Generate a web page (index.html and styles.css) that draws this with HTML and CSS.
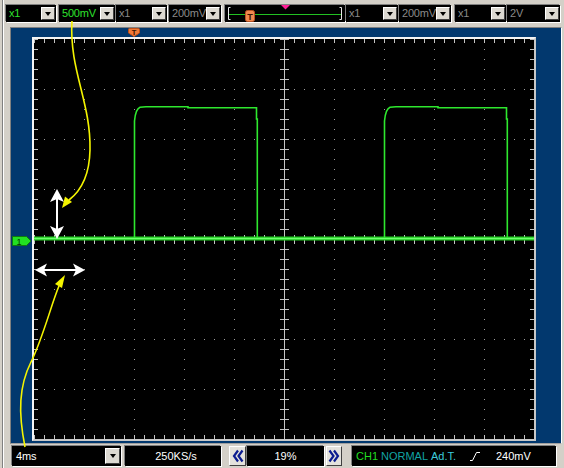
FILE: index.html
```html
<!DOCTYPE html>
<html>
<head>
<meta charset="utf-8">
<link rel="stylesheet" href="styles.css">
</head>
<body>
<div class="app">
  <div class="edge"></div>
  <div class="main">
    <div class="topbar">
      <div class="combo t1"><span class="val green">x1</span><span class="btn"><i class="tri"></i></span></div>
      <div class="combo t2"><span class="val green">500mV</span><span class="btn"><i class="tri"></i></span></div>
      <div class="combo t3"><span class="val gray">x1</span><span class="btn"><i class="tri"></i></span></div>
      <div class="combo t4"><span class="val gray">200mV</span><span class="btn"><i class="tri"></i></span></div>
      <div class="slider">
        <svg width="120" height="17" viewBox="0 0 120 17">
          <line x1="4" y1="9.5" x2="116" y2="9.5" stroke="#22c022" stroke-width="1"/>
          <polyline points="5.5,2.5 3.5,2.5 3.5,14.5 5.5,14.5" fill="none" stroke="#e8e8e8" stroke-width="1"/>
          <polyline points="114.5,2.5 116.5,2.5 116.5,14.5 114.5,14.5" fill="none" stroke="#e8e8e8" stroke-width="1"/>
          <rect x="20.5" y="5.5" width="9" height="11" rx="2" fill="#f08850" stroke="#b85020"/>
          <text x="25" y="14.5" class="mk">T</text>
          <polygon points="56,0 65,0 60.5,4.5" fill="#ff1e96"/>
        </svg>
      </div>
      <div class="combo t5"><span class="val gray">x1</span><span class="btn"><i class="tri"></i></span></div>
      <div class="combo t6"><span class="val gray">200mV</span><span class="btn"><i class="tri"></i></span></div>
      <div class="combo t7"><span class="val gray">x1</span><span class="btn"><i class="tri"></i></span></div>
      <div class="combo t8"><span class="val gray">2V</span><span class="btn"><i class="tri"></i></span></div>
    </div>

    <div class="panel">
      <div class="tmark">
        <svg width="12" height="9" viewBox="0 0 12 9">
          <path d="M1.5,0.5 H10.5 Q11.5,0.5 11.5,1.5 V5 L6,8.5 L0.5,5 V1.5 Q0.5,0.5 1.5,0.5 Z" fill="#f07a38" stroke="#c05018"/>
          <text x="6" y="6.5" class="mk2">T</text>
        </svg>
      </div>
      <div class="chmark">
        <svg width="20" height="10" viewBox="0 0 20 10">
          <path d="M0.5,0.5 H14.5 L19,5 L14.5,9.5 H0.5 Z" fill="#22e022" stroke="#0e7a0e"/>
          <text x="7" y="8.5" class="mk3">1</text>
        </svg>
      </div>
      <div class="scope">
        <svg class="plot" width="500" height="400" viewBox="0 0 500 400">
          <g shape-rendering="crispEdges" stroke="#9c9c9c" stroke-width="1" stroke-dasharray="1 9">
            <line x1="50.5" y1="0" x2="50.5" y2="400"/>
            <line x1="100.5" y1="0" x2="100.5" y2="400"/>
            <line x1="150.5" y1="0" x2="150.5" y2="400"/>
            <line x1="200.5" y1="0" x2="200.5" y2="400"/>
            <line x1="300.5" y1="0" x2="300.5" y2="400"/>
            <line x1="350.5" y1="0" x2="350.5" y2="400"/>
            <line x1="400.5" y1="0" x2="400.5" y2="400"/>
            <line x1="450.5" y1="0" x2="450.5" y2="400"/>
            <line x1="0" y1="50.5" x2="500" y2="50.5"/>
            <line x1="0" y1="100.5" x2="500" y2="100.5"/>
            <line x1="0" y1="150.5" x2="500" y2="150.5"/>
            <line x1="0" y1="250.5" x2="500" y2="250.5"/>
            <line x1="0" y1="300.5" x2="500" y2="300.5"/>
            <line x1="0" y1="350.5" x2="500" y2="350.5"/>
          </g>
          <g shape-rendering="crispEdges" stroke="#c4c4c4">
            <line x1="250.5" y1="0" x2="250.5" y2="400" stroke-width="1"/>
            <line x1="0" y1="200.5" x2="500" y2="200.5" stroke-width="1"/>
            <line x1="250.5" y1="0" x2="250.5" y2="400" stroke-width="9" stroke-dasharray="1 9"/>
            <line x1="0" y1="200.5" x2="500" y2="200.5" stroke-width="9" stroke-dasharray="1 9"/>
            <line x1="0" y1="2" x2="500" y2="2" stroke-width="4" stroke-dasharray="1 9"/>
            <line x1="0" y1="398" x2="500" y2="398" stroke-width="4" stroke-dasharray="1 9"/>
            <line x1="2" y1="0" x2="2" y2="400" stroke-width="4" stroke-dasharray="1 9"/>
            <line x1="498" y1="0" x2="498" y2="400" stroke-width="4" stroke-dasharray="1 9"/>
          </g>
          <g fill="none">
            <line x1="0" y1="199.5" x2="500" y2="199.5" stroke="#1fc81f" stroke-width="4"/>
            <line x1="0" y1="199.5" x2="500" y2="199.5" stroke="#6cff6c" stroke-width="1.5"/>
            <path d="M100.5,199 V82 C101.3,73 103,69.5 106,68.3 L112,67.8 H154 V68.8 H222.5 V80 H223.3 V199" stroke="#2ee82e" stroke-width="1.6"/>
            <path d="M350.5,199 V82 C351.3,73 353,69.5 356,68.3 L362,67.8 H404 V68.8 H472.5 V80 H473.3 V199" stroke="#2ee82e" stroke-width="1.6"/>
          </g>
          <g fill="#ffffff" stroke="none">
            <rect x="22" y="160" width="2" height="30"/>
            <polygon points="23,150 30,163 23,160 16,163"/>
            <polygon points="23,200 30,187 23,190 16,187"/>
            <rect x="9" y="230" width="34" height="2"/>
            <polygon points="1,231 13,224.5 10,231 13,237.5"/>
            <polygon points="51,231 39,224.5 42,231 39,237.5"/>
          </g>
        </svg>
      </div>
    </div>

    <div class="bottombar">
      <div class="combo b1"><span class="val white">4ms</span><span class="btn"><i class="tri"></i></span></div>
      <div class="field rate">250KS/s</div>
      <div class="arrowbtn prev">
        <svg width="12" height="14" viewBox="0 0 12 14"><polyline points="6,1.5 2,7 6,12.5" fill="none" stroke="#0c1c90" stroke-width="2.2"/><polyline points="10.5,1.5 6.5,7 10.5,12.5" fill="none" stroke="#0c1c90" stroke-width="2.2"/></svg>
      </div>
      <div class="field pct">19%</div>
      <div class="arrowbtn next">
        <svg width="12" height="14" viewBox="0 0 12 14"><polyline points="1.5,1.5 5.5,7 1.5,12.5" fill="none" stroke="#0c1c90" stroke-width="2.2"/><polyline points="6,1.5 10,7 6,12.5" fill="none" stroke="#0c1c90" stroke-width="2.2"/></svg>
      </div>
      <div class="status">
        <span class="s-ch">CH1</span>
        <span class="s-mode">NORMAL</span>
        <span class="s-adt">Ad.T.</span>
        <span class="s-edge"><svg width="10" height="11" viewBox="0 0 10 11"><polyline points="0,9.5 2.5,9.5 6.5,1.5 10,1.5" fill="none" stroke="#ffffff" stroke-width="1"/></svg></span>
        <span class="s-lvl">240mV</span>
      </div>
    </div>
  </div>
</div>

<svg class="annot" width="564" height="468" viewBox="0 0 564 468">
  <g fill="none" stroke="#f4f400" stroke-width="1.6">
    <path d="M72,21 C69,70 91,102 90,150 C89.5,175 82,190 69,200"/>
    <path d="M25,447 C18,412 19,386 31,362 C43,338 52,302 59,286"/>
  </g>
  <g fill="#f4f400">
    <polygon points="62,208 65,196.5 72,202"/>
    <polygon points="65,275 55,284 62,288"/>
  </g>
</svg>
</body>
</html>
```

FILE: styles.css
```css
html, body {
  margin: 0;
  padding: 0;
}

body {
  width: 564px;
  height: 468px;
  overflow: hidden;
  position: relative;
  background: #d4d0c8;
  font-family: "Liberation Sans", Arial, sans-serif;
  font-size: 11px;
}

.app {
  display: flex;
  height: 468px;
}

.edge {
  width: 5px;
  flex: none;
  background: linear-gradient(to right, #d4d0c8 0 2px, #808080 2px 3px, #ffffff 3px 4px, #d4d0c8 4px 5px);
}

.main {
  width: 559px;
  flex: none;
  display: flex;
  flex-direction: column;
}

/* ---------- top bar ---------- */
.topbar {
  height: 27px;
  box-sizing: border-box;
  padding-top: 5px;
  display: flex;
  align-items: flex-start;
}

.combo {
  display: flex;
  height: 17px;
  background: #000;
  box-shadow: -1px -1px 0 #808080, 1px 1px 0 #ffffff;
  flex: none;
}

.combo .val {
  flex: 1;
  padding-left: 3px;
  line-height: 17px;
  white-space: nowrap;
  overflow: visible;
  letter-spacing: -0.2px;
}

.combo .btn {
  width: 14px;
  flex: none;
  margin: 2px 1px 2px 0;
  box-sizing: border-box;
  background: #dcd9d2;
  border: 1px solid;
  border-color: #ffffff #404040 #404040 #ffffff;
  display: flex;
  align-items: center;
  justify-content: center;
}

.tri {
  display: block;
  width: 0;
  height: 0;
  border-left: 3.5px solid transparent;
  border-right: 3.5px solid transparent;
  border-top: 4px solid #000;
}

.green { color: #2ee02e; }
.gray { color: #8a8a8a; }
.white { color: #ffffff; }

.t1 { margin-left: 1px; width: 50px; }
.t2 { margin-left: 3px; width: 56px; }
.t3 { margin-left: 1px; width: 51px; }
.t4 { margin-left: 2px; width: 52px; }
.t5 { margin-left: 1px; width: 52px; }
.t6 { margin-left: 1px; width: 52px; }
.t7 { margin-left: 4px; width: 51px; }
.t8 { margin-left: 1px; width: 53px; }

.slider {
  margin-left: 4px;
  width: 120px;
  height: 17px;
  background: #000;
  box-shadow: -1px -1px 0 #808080, 1px 1px 0 #ffffff;
  flex: none;
  overflow: visible;
}

.slider svg {
  display: block;
  overflow: visible;
}

.mk {
  font-family: "Liberation Sans", Arial, sans-serif;
  font-size: 9px;
  font-weight: bold;
  fill: #3a1400;
  text-anchor: middle;
}

.mk2 {
  font-family: "Liberation Sans", Arial, sans-serif;
  font-size: 7.5px;
  font-weight: bold;
  fill: #3a1400;
  text-anchor: middle;
}

.mk3 {
  font-family: "Liberation Sans", Arial, sans-serif;
  font-size: 9px;
  fill: #063006;
  text-anchor: middle;
}

/* ---------- blue panel ---------- */
.panel {
  position: relative;
  margin-left: 5px;
  width: 552px;
  height: 417px;
  box-sizing: border-box;
  background: #02386e;
  border-top: 1px solid #808080;
  border-left: 1px solid #808080;
  border-right: 1px solid #ffffff;
  border-bottom: 1px solid #a0a0a0;
  padding: 9px 0 0 21px;
}

.tmark {
  position: absolute;
  left: 117px;
  top: 0;
  line-height: 0;
}

.chmark {
  position: absolute;
  left: 1px;
  top: 208px;
  line-height: 0;
}

.scope {
  width: 500px;
  height: 400px;
  border: 2px solid;
  border-color: #f4f4f4 #c8c8c8 #c8c8c8 #f4f4f4;
  background: #000;
}

.plot {
  display: block;
}

/* ---------- bottom bar ---------- */
.bottombar {
  height: 24px;
  box-sizing: border-box;
  padding-top: 2px;
  display: flex;
  align-items: flex-start;
}

.bottombar .combo {
  height: 20px;
}

.bottombar .combo .val {
  line-height: 20px;
  padding-left: 4px;
}

.bottombar .combo .btn {
  width: 15px;
}

.b1 { margin-left: 7px; width: 109px; }

.field {
  height: 20px;
  line-height: 20px;
  background: #000;
  color: #fff;
  text-align: center;
  box-shadow: -1px -1px 0 #808080, 1px 1px 0 #ffffff;
  flex: none;
}

.rate { margin-left: 4px; width: 96px; padding-left: 6px; box-sizing: border-box; }
.pct { margin-left: 1px; width: 77px; }

.arrowbtn {
  height: 20px;
  box-sizing: border-box;
  background: #e4e2dc;
  border: 1px solid;
  border-color: #ffffff #404040 #404040 #ffffff;
  display: flex;
  align-items: center;
  justify-content: center;
  flex: none;
}

.arrowbtn svg { display: block; }

.prev { margin-left: 8px; width: 17px; }
.next { margin-left: 2px; width: 16px; }

.status {
  margin-left: 10px;
  width: 204px;
  height: 20px;
  line-height: 20px;
  background: #000;
  box-shadow: -1px -1px 0 #808080, 1px 1px 0 #ffffff;
  display: flex;
  align-items: center;
  padding-left: 4px;
  box-sizing: border-box;
  white-space: nowrap;
  flex: none;
}

.status span { flex: none; display: block; }

.s-ch { width: 25px; color: #22dd22; }
.s-mode { width: 50px; color: #12a4a4; }
.s-adt { width: 39px; color: #3ccadc; }
.s-edge { width: 26px; height: 11px; line-height: 0; }
.s-lvl { color: #ffffff; }

/* ---------- annotation overlay ---------- */
.annot {
  position: absolute;
  left: 0;
  top: 0;
  pointer-events: none;
}
```
